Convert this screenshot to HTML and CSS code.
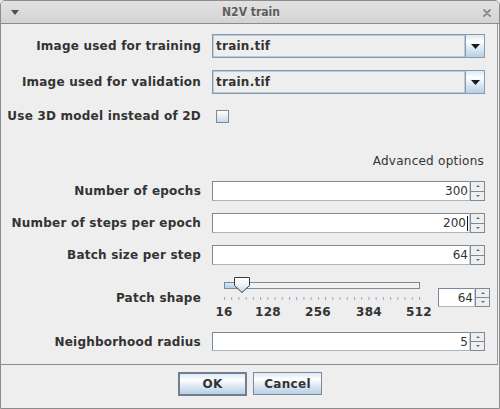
FILE: index.html
```html
<!DOCTYPE html>
<html>
<head>
<meta charset="utf-8">
<link rel="stylesheet" href="styles.css">
</head>
<body>
<div class="window">
  <div class="titlebar">
    <svg class="menu-arrow" width="8" height="5" viewBox="0 0 8 5"><path d="M0 0 H8 L4 5 Z" fill="#505050"/></svg>
    <span class="title">N2V train</span>
    <svg class="close" width="8" height="8" viewBox="0 0 8 8"><path d="M1 1 L7 7 M7 1 L1 7" stroke="#8a8a8a" stroke-width="1.8" stroke-linecap="round"/></svg>
  </div>
  <div class="panel">
    <div class="row row-combo first">
      <div class="lbl">Image used for training</div>
      <div class="combo"><span class="combo-text">train.tif</span><span class="combo-btn"><svg width="9" height="5" viewBox="0 0 9 5"><path d="M0 0 H9 L4.5 5 Z" fill="#1a1a1a"/></svg></span></div>
    </div>
    <div class="row row-combo second">
      <div class="lbl">Image used for validation</div>
      <div class="combo"><span class="combo-text">train.tif</span><span class="combo-btn"><svg width="9" height="5" viewBox="0 0 9 5"><path d="M0 0 H9 L4.5 5 Z" fill="#1a1a1a"/></svg></span></div>
    </div>
    <div class="row row-check">
      <div class="lbl">Use 3D model instead of 2D</div>
      <div class="checkcell"><span class="checkbox"></span></div>
    </div>
    <div class="row row-adv">
      <div></div>
      <div class="adv">Advanced options</div>
    </div>
    <div class="row row-spin first-spin">
      <div class="lbl">Number of epochs</div>
      <div class="spinner"><div class="spin-field">300</div><div class="spin-btns"><span class="sb up"><i></i></span><span class="sb down"><i></i></span></div></div>
    </div>
    <div class="row row-spin">
      <div class="lbl">Number of steps per epoch</div>
      <div class="spinner"><div class="spin-field">200<span class="caret"></span></div><div class="spin-btns"><span class="sb up"><i></i></span><span class="sb down"><i></i></span></div></div>
    </div>
    <div class="row row-spin">
      <div class="lbl">Batch size per step</div>
      <div class="spinner"><div class="spin-field">64</div><div class="spin-btns"><span class="sb up"><i></i></span><span class="sb down"><i></i></span></div></div>
    </div>
    <div class="row row-patch">
      <div class="lbl patch-lbl">Patch shape</div>
      <div class="patch-ctl">
        <div class="slider">
          <svg class="slider-svg" width="226" height="30" viewBox="0 0 226 30">
            <defs>
              <linearGradient id="thumbg" x1="0" y1="0" x2="0" y2="1">
                <stop offset="0" stop-color="#ffffff"/>
                <stop offset="0.5" stop-color="#eef3f8"/>
                <stop offset="1" stop-color="#c8d8e9"/>
              </linearGradient>
              <linearGradient id="fillg" x1="0" y1="0" x2="0" y2="1">
                <stop offset="0" stop-color="#dde8f3"/>
                <stop offset="1" stop-color="#b8cfe5"/>
              </linearGradient>
              <pattern id="ticks" patternUnits="userSpaceOnUse" x="12" y="25" width="7.222" height="3">
                <rect x="0" y="0" width="1" height="3" fill="#9aa6b2"/>
              </pattern>
            </defs>
            <rect x="12.5" y="10.5" width="195" height="6" fill="#f2f2f2" stroke="#7a8a99"/>
            <rect x="13" y="11" width="17" height="5" fill="url(#fillg)"/>
            <path d="M22.5 5.5 H37.5 V13.5 L30 20.5 L22.5 13.5 Z" fill="url(#thumbg)" stroke="#3a3a3a"/>
            <rect x="12" y="25" width="197" height="3" fill="url(#ticks)"/>
          </svg>
          <div class="ticklabels">
            <span class="tl" style="left:12px">16</span>
            <span class="tl" style="left:56px">128</span>
            <span class="tl" style="left:106px">256</span>
            <span class="tl" style="left:157px">384</span>
            <span class="tl" style="left:207px">512</span>
          </div>
        </div>
        <div class="spinner small"><div class="spin-field">64</div><div class="spin-btns"><span class="sb up"><i></i></span><span class="sb down"><i></i></span></div></div>
      </div>
    </div>
    <div class="row row-spin neigh">
      <div class="lbl">Neighborhood radius</div>
      <div class="spinner"><div class="spin-field">5</div><div class="spin-btns"><span class="sb up"><i></i></span><span class="sb down"><i></i></span></div></div>
    </div>
  </div>
  <div class="buttons">
    <button class="btn default">OK</button>
    <button class="btn">Cancel</button>
  </div>
</div>
</body>
</html>
```
FILE: styles.css
```css
* { box-sizing: border-box; }
html, body { margin: 0; padding: 0; }
body {
  width: 500px;
  height: 409px;
  overflow: hidden;
  background: #eeeeee;
  font-family: "DejaVu Sans", "Liberation Sans", sans-serif;
  font-size: 12px;
  color: #333333;
  letter-spacing: 0.25px;
}
.window {
  width: 500px;
  height: 409px;
  border: 1px solid #8c8c8c;
  border-radius: 5px 5px 0 0;
  background: #eeeeee;
  display: flex;
  flex-direction: column;
  overflow: hidden;
}
.titlebar {
  flex: none;
  height: 23px;
  background: linear-gradient(#e2e2e2, #d3d3d3);
  border-bottom: 1px solid #7e8e9e;
  display: grid;
  grid-template-columns: 1fr auto 1fr;
  align-items: center;
  padding: 0 8px 0 10px;
}
.menu-arrow { justify-self: start; margin-top: 1px; }
.title {
  font-family: "DejaVu Sans Condensed", "DejaVu Sans", sans-serif;
  font-stretch: condensed;
  font-weight: bold;
  font-size: 12px;
  letter-spacing: 0;
  color: #5c5c5c;
  text-shadow: 0 1px 0 #eeeeee;
}
.close { justify-self: end; margin-top: 1px; }

.panel {
  flex: none;
  width: 497px;
  height: 341px;
  border-right: 1px solid #9c9c9c;
  border-bottom: 1px solid #7e8e9e;
  padding-top: 10px;
  display: flex;
  flex-direction: column;
}
.row {
  display: grid;
  grid-template-columns: 200px 273px;
  column-gap: 11px;
  align-items: center;
}
.lbl {
  text-align: right;
  font-weight: bold;
  white-space: nowrap;
  letter-spacing: 0.22px;
}
.row-combo { height: 24px; }
.row-combo.second { margin-top: 12px; }
.row-check { height: 24px; margin-top: 10px; }
.row-adv { height: 20px; margin-top: 23px; }
.row-spin { height: 20px; margin-top: 12px; }
.row-spin.first-spin { margin-top: 10px; }
.row-patch { height: 50px; margin-top: 7px; align-items: start; }
.row-spin.neigh { height: 19px; margin-top: 10px; }

.combo {
  height: 24px;
  display: flex;
  border: 1px solid #8799ab;
  background: #eeeeee;
}
.combo-text {
  flex: 1;
  display: flex;
  align-items: center;
  padding-left: 2px;
  font-weight: bold;
  border: 1px solid #b8cbdd;
}
.combo-btn {
  width: 19px;
  border-left: 1px solid #8799ab;
  background: linear-gradient(#dde8f3 0%, #ffffff 30%, #dde8f3 60%, #b8cfe5 100%);
  display: flex;
  align-items: center;
  justify-content: center;
  padding-left: 1px;
}

.checkcell { display: flex; align-items: center; }
.checkbox {
  width: 13px;
  height: 13px;
  margin-left: 4px;
  border: 1px solid #7a8a99;
  background: linear-gradient(#ffffff 0%, #eaf0f7 40%, #c7d8ea 100%);
}

.adv { text-align: right; padding-right: 1px; white-space: nowrap; }

.spinner {
  display: flex;
  height: 20px;
  width: 273px;
}
.row-spin.neigh .spinner { height: 19px; }
.spin-field {
  flex: 1;
  background: #ffffff;
  border: 1px solid #7a8a99;
  border-right: 1px solid #c8d0d8;
  border-bottom: 1px solid #a8b4c0;
  text-align: right;
  padding-right: 1px;
  display: flex;
  align-items: center;
  justify-content: flex-end;
  line-height: 1;
  letter-spacing: 0;
}
.caret {
  display: inline-block;
  width: 1px;
  height: 15px;
  background: #111111;
  margin-left: 1px;
}
.spin-btns {
  width: 15px;
  display: flex;
  flex-direction: column;
}
.sb {
  flex: 1;
  border: 1px solid #7a8a99;
  background: #eeeeee;
  display: flex;
  align-items: center;
  justify-content: center;
}
.sb.down { border-top: none; }
.sb i {
  display: block;
  width: 0;
  height: 0;
  border-left: 2px solid transparent;
  border-right: 2px solid transparent;
}
.sb.up i { border-bottom: 2px solid #6a6a6a; }
.sb.down i { border-top: 2px solid #6a6a6a; }

.patch-lbl { margin-top: 19px; }
.patch-ctl {
  width: 278px;
  display: flex;
}
.slider {
  width: 226px;
  height: 50px;
  display: flex;
  flex-direction: column;
}
.slider-svg { display: block; flex: none; }
.ticklabels {
  position: relative;
  height: 14px;
  margin-top: 3px;
}
.tl {
  position: absolute;
  top: 0;
  transform: translateX(-50%);
  font-weight: bold;
  white-space: nowrap;
}
.spinner.small {
  width: 52px;
  height: 19px;
  margin-top: 16px;
}

.buttons {
  flex: 1;
  display: flex;
  justify-content: center;
  align-items: flex-start;
  padding-top: 7px;
  gap: 6px;
}
.btn {
  width: 69px;
  height: 24px;
  font-family: "DejaVu Sans", "Liberation Sans", sans-serif;
  font-size: 12px;
  font-weight: bold;
  letter-spacing: 0.3px;
  color: #333333;
  border: 1px solid #7a8a99;
  border-radius: 0;
  background: linear-gradient(#dde8f3 0%, #ffffff 30%, #dde8f3 60%, #b8cfe5 100%);
  padding: 0;
  margin: 0;
}
.btn.default {
  border: 2px solid #6f7f8f;
}
.btn.default + .btn { height: 23px; }
```
